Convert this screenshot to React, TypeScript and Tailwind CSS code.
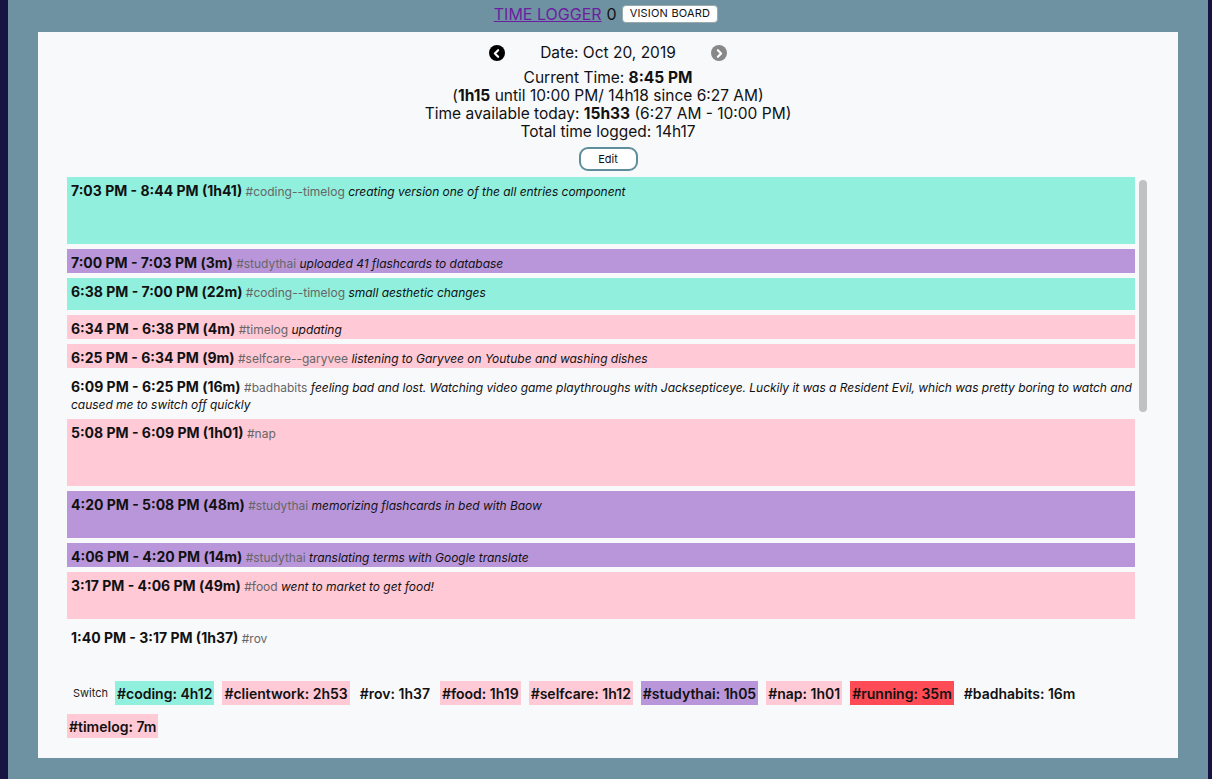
import { ChevronLeft, ChevronRight } from 'lucide-react';

type Entry = {
  time: string;
  tag: string;
  desc?: string;
  bg: string;
  h: string;
};

const entries: Entry[] = [
  { time: '7:03 PM - 8:44 PM (1h41)', tag: '#coding--timelog', desc: 'creating version one of the all entries component', bg: 'bg-[#90efdd]', h: 'h-[67px]' },
  { time: '7:00 PM - 7:03 PM (3m)', tag: '#studythai', desc: 'uploaded 41 flashcards to database', bg: 'bg-[#b996da]', h: 'h-[24px]' },
  { time: '6:38 PM - 7:00 PM (22m)', tag: '#coding--timelog', desc: 'small aesthetic changes', bg: 'bg-[#90efdd]', h: 'h-[32px]' },
  { time: '6:34 PM - 6:38 PM (4m)', tag: '#timelog', desc: 'updating', bg: 'bg-[#ffc9d6]', h: 'h-[24px]' },
  { time: '6:25 PM - 6:34 PM (9m)', tag: '#selfcare--garyvee', desc: 'listening to Garyvee on Youtube and washing dishes', bg: 'bg-[#ffc9d6]', h: 'h-[24px]' },
  { time: '6:09 PM - 6:25 PM (16m)', tag: '#badhabits', desc: 'feeling bad and lost. Watching video game playthroughs with Jacksepticeye. Luckily it was a Resident Evil, which was pretty boring to watch and caused me to switch off quickly', bg: 'bg-transparent', h: 'h-[41px]' },
  { time: '5:08 PM - 6:09 PM (1h01)', tag: '#nap', bg: 'bg-[#ffc9d6]', h: 'h-[67px]' },
  { time: '4:20 PM - 5:08 PM (48m)', tag: '#studythai', desc: 'memorizing flashcards in bed with Baow', bg: 'bg-[#b996da]', h: 'h-[47px]' },
  { time: '4:06 PM - 4:20 PM (14m)', tag: '#studythai', desc: 'translating terms with Google translate', bg: 'bg-[#b996da]', h: 'h-[24px]' },
  { time: '3:17 PM - 4:06 PM (49m)', tag: '#food', desc: 'went to market to get food!', bg: 'bg-[#ffc9d6]', h: 'h-[47px]' },
  { time: '1:40 PM - 3:17 PM (1h37)', tag: '#rov', bg: 'bg-transparent', h: 'h-[97px]' },
];

const totals = [
  { label: '#coding: 4h12', bg: 'bg-[#90efdd]' },
  { label: '#clientwork: 2h53', bg: 'bg-[#ffc9d6]' },
  { label: '#rov: 1h37', bg: 'bg-transparent' },
  { label: '#food: 1h19', bg: 'bg-[#ffc9d6]' },
  { label: '#selfcare: 1h12', bg: 'bg-[#ffc9d6]' },
  { label: '#studythai: 1h05', bg: 'bg-[#b996da]' },
  { label: '#nap: 1h01', bg: 'bg-[#ffc9d6]' },
  { label: '#running: 35m', bg: 'bg-[#ff4b55]' },
  { label: '#badhabits: 16m', bg: 'bg-transparent' },
  { label: '#timelog: 7m', bg: 'bg-[#ffc9d6]' },
];

function EntryRow({ e }: { e: Entry }) {
  return (
    <div className={`${e.h} ${e.bg} shrink-0 overflow-hidden pl-1 pt-[5px] text-[12px] leading-[17px] text-[#111]`}>
      <span className="text-[14px] font-bold">{e.time}</span>{' '}
      <span className="text-[#666]">{e.tag}</span>{' '}
      {e.desc && <span className="italic tracking-[-0.03px]">{e.desc}</span>}
    </div>
  );
}

export default function App() {
  return (
    <div className="min-h-screen bg-[#6e92a1] border-l-8 border-r-4 border-[#171441] font-['Inter','Liberation_Sans',sans-serif] text-[#111]">
      {/* Top bar */}
      <header className="h-8 flex items-center justify-center gap-[5px] pr-[4px] pb-[5px]">
        <a href="#" className="text-[16px] text-[#6b1fa0] underline">TIME LOGGER</a>
        <span className="text-[16px]">0</span>
        <button className="h-[18px] px-[7px] bg-white rounded-[4px] border border-[#9aa] text-[11px] tracking-[0.2px] leading-none">
          VISION BOARD
        </button>
      </header>

      {/* Main panel */}
      <main className="mx-[30px] h-[726px] bg-[#f8f9fb] pt-[11px] flex flex-col">
        <div className="h-5 flex items-center justify-center gap-[35px]">
          <span className="w-4 h-4 rounded-full bg-black flex items-center justify-center">
            <ChevronLeft size={13} strokeWidth={4} className="text-white -ml-[1px]" />
          </span>
          <span className="text-[15.5px]">Date: Oct 20, 2019</span>
          <span className="w-4 h-4 rounded-full bg-[#888] flex items-center justify-center">
            <ChevronRight size={13} strokeWidth={4} className="text-white ml-[1px]" />
          </span>
        </div>

        <div className="mt-[6px] text-center text-[15.5px] leading-[18px]">
          <div>Current Time: <b>8:45 PM</b></div>
          <div>(<b>1h15</b> until 10:00 PM/ 14h18 since 6:27 AM)</div>
          <div>Time available today: <b>15h33</b> (6:27 AM - 10:00 PM)</div>
          <div>Total time logged: 14h17</div>
        </div>

        <div className="mt-[6px] flex justify-center">
          <button className="w-[59px] h-[24px] rounded-[9px] border-2 border-[#5f8d9c] bg-white text-[11px]">
            Edit
          </button>
        </div>

        {/* Entry list */}
        <div className="mt-[6px] mx-[29px] h-[478px] flex overflow-hidden">
          <div className="flex-1 flex flex-col gap-[5px] overflow-hidden">
            {entries.map((e, i) => (
              <EntryRow key={i} e={e} />
            ))}
          </div>
          <div className="w-[14px] pl-[4px] pt-[3px]">
            <div className="w-[8px] h-[232px] rounded-full bg-[#c1c1c1]" />
          </div>
        </div>

        {/* Tag totals */}
        <div className="mt-[26px] mx-[29px] flex flex-wrap items-center gap-x-[8px] gap-y-[9px]">
          <button className="h-6 pl-[6px] pr-[1px] -mr-[2px] text-[11px] text-[#222]">Switch</button>
          {totals.map((t) => (
            <span key={t.label} className={`${t.bg} h-6 px-[2px] flex items-center text-[14px] font-semibold`}>
              {t.label}
            </span>
          ))}
        </div>
      </main>
    </div>
  );
}
